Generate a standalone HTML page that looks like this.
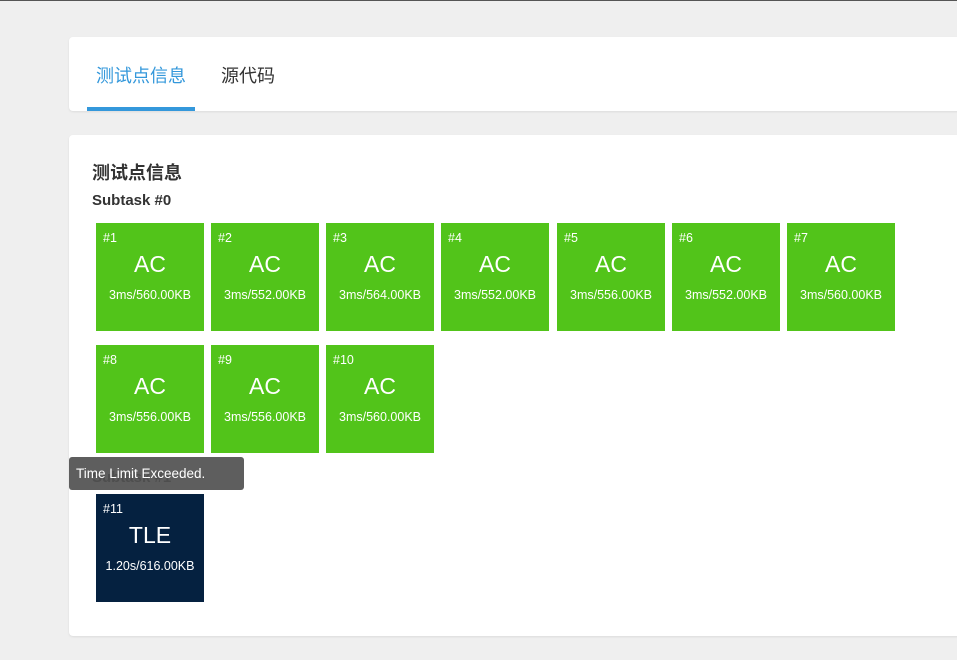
<!DOCTYPE html>
<html><head><meta charset="utf-8"><style>
body{margin:0;width:957px;height:660px;background:#efefef;border-top:1px solid #555;box-sizing:border-box;overflow:hidden;position:relative;font-family:"Liberation Sans","Noto Sans CJK SC",sans-serif;}
.card{position:absolute;left:69px;width:900px;background:#fff;border-radius:4px;box-shadow:0 1px 2px rgba(0,0,0,.08);}
.tab{position:absolute;top:25px;font-size:18px;}
.b{position:absolute;width:108px;height:108px;background:#52c41a;color:#fff;text-align:center;}
.b .n{position:absolute;left:7px;top:8px;font-size:12.5px;}
.b .s{position:absolute;top:28px;left:0;right:0;font-size:23px;}
.b .m{position:absolute;top:65px;left:0;right:0;font-size:12.5px;}
</style></head><body>
<div class="card" style="top:36px;height:74px;">
<div class="tab" style="left:27px;color:#3498db">测试点信息</div>
<div class="tab" style="left:152px;color:#333">源代码</div>
<div style="position:absolute;left:18px;top:70px;width:108px;height:4px;background:#3498db"></div>
</div>
<div class="card" style="top:134px;height:501px;">
<div style="position:absolute;left:23px;top:24px;font-size:18px;font-weight:bold;color:#333">测试点信息</div>
<div style="position:absolute;left:23px;top:57px;font-size:15px;font-weight:bold;color:#333">Subtask #0</div>
<div style="position:absolute;left:23px;top:334px;font-size:15px;font-weight:bold;color:#333">Subtask #1</div>
</div>
<div class="b" style="left:96px;top:222px"><div class="n">#1</div><div class="s">AC</div><div class="m">3ms/560.00KB</div></div>
<div class="b" style="left:211px;top:222px"><div class="n">#2</div><div class="s">AC</div><div class="m">3ms/552.00KB</div></div>
<div class="b" style="left:326px;top:222px"><div class="n">#3</div><div class="s">AC</div><div class="m">3ms/564.00KB</div></div>
<div class="b" style="left:441px;top:222px"><div class="n">#4</div><div class="s">AC</div><div class="m">3ms/552.00KB</div></div>
<div class="b" style="left:557px;top:222px"><div class="n">#5</div><div class="s">AC</div><div class="m">3ms/556.00KB</div></div>
<div class="b" style="left:672px;top:222px"><div class="n">#6</div><div class="s">AC</div><div class="m">3ms/552.00KB</div></div>
<div class="b" style="left:787px;top:222px"><div class="n">#7</div><div class="s">AC</div><div class="m">3ms/560.00KB</div></div>
<div class="b" style="left:96px;top:344px"><div class="n">#8</div><div class="s">AC</div><div class="m">3ms/556.00KB</div></div>
<div class="b" style="left:211px;top:344px"><div class="n">#9</div><div class="s">AC</div><div class="m">3ms/556.00KB</div></div>
<div class="b" style="left:326px;top:344px"><div class="n">#10</div><div class="s">AC</div><div class="m">3ms/560.00KB</div></div>
<div class="b" style="left:96px;top:493px;background:#052140"><div class="n">#11</div><div class="s">TLE</div><div class="m">1.20s/616.00KB</div></div>
<div style="position:absolute;left:69px;top:456px;width:175px;height:33px;background:rgba(80,80,80,.92);border-radius:3px;color:#fff;font-size:13.5px;line-height:33px;padding-left:7px;box-sizing:border-box">Time Limit Exceeded.</div>
</body></html>
